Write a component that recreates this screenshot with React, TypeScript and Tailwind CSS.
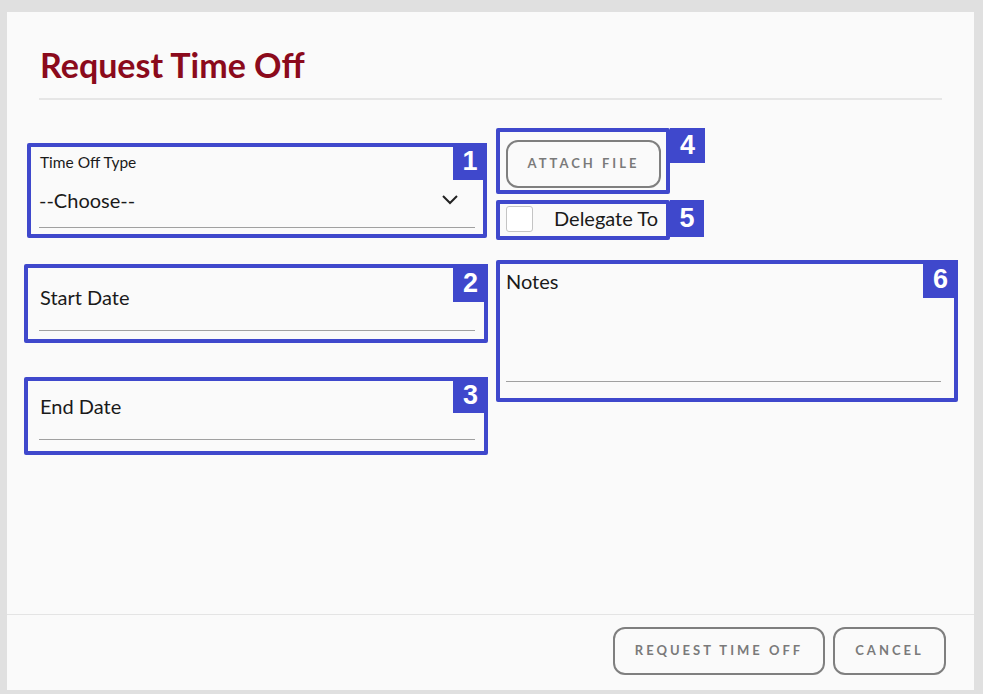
import React from 'react';

const lato = { fontFamily: 'Lato, "Liberation Sans", sans-serif' };

function Badge({ n, className }: { n: string; className: string }) {
  return (
    <div
      className={`absolute flex items-center justify-center bg-[#3f48cc] text-white text-[27px] font-bold leading-none font-['Liberation_Sans',Arial,sans-serif] ${className}`}
    >
      {n}
    </div>
  );
}

function Marker({ box, badge, n }: { box: string; badge: string; n: string }) {
  return (
    <>
      <div className={`absolute border-[4px] border-[#3f48cc] rounded-[2px] pointer-events-none ${box}`} />
      <Badge n={n} className={badge} />
    </>
  );
}

function OutlineButton({ label, className }: { label: string; className: string }) {
  return (
    <button
      className={`h-[48px] border-2 border-[#7f7f7f] rounded-[12px] text-[13px] font-bold tracking-[3px] text-[#7a7a7a] bg-transparent ${className}`}
    >
      {label}
    </button>
  );
}

export default function App() {
  return (
    <div className="h-[694px] w-[983px] bg-[#e0e0e0] pt-[12px] pl-[7px]" style={lato}>
      <div className="relative h-[678px] w-[967px] bg-[#fafafa] flex flex-col text-[#1a1a1a]">
        <header className="px-[32px] pt-[33px]">
          <h1 className="text-[34px] font-bold text-[#8b0a1c] leading-[40px] pl-[1px]">Request Time Off</h1>
          <div className="mt-[13px] h-[2px] bg-[#e6e6e6]" />
        </header>

        <main className="flex-1 flex gap-[31px] pl-[32px] pr-[33px] pt-[29px]">
          <div className="w-[436px] flex flex-col pt-[23px]">
            <div>
              <div className="text-[15.5px] leading-[20px] pl-[1px]">Time Off Type</div>
              <div className="h-[56px] flex items-center justify-between border-b border-[#a0a0a0]">
                <span className="text-[20px]">--Choose--</span>
                <svg width="18" height="11" viewBox="0 0 18 11" className="mr-[16px]">
                  <path d="M2 2 L9 9 L16 2" fill="none" stroke="#222" strokeWidth="2" />
                </svg>
              </div>
            </div>
            <div className="mt-[57px] pb-[21px] border-b border-[#a0a0a0] text-[20px] leading-[24px] pl-[1px]">
              Start Date
            </div>
            <div className="mt-[63px] pb-[21px] border-b border-[#a0a0a0] text-[20px] leading-[24px] pl-[1px]">
              End Date
            </div>
          </div>

          <div className="w-[435px] flex flex-col pt-[11px]">
            <OutlineButton label="ATTACH FILE" className="w-[155px]" />
            <div className="mt-[18px] h-[26px] flex items-center gap-[21px]">
              <div className="w-[27px] h-[26px] border border-[#c4c4c4] rounded-[3px] bg-white" />
              <span className="text-[20px] -mt-[3px]">Delegate To</span>
            </div>
            <div className="mt-[37px] pb-[88px] border-b border-[#a0a0a0] text-[20px] leading-[24px]">Notes</div>
          </div>
        </main>

        <footer className="border-t border-[#e4e4e4] flex justify-end gap-[8px] pt-[12px] pb-[15px] pr-[28px]">
          <OutlineButton label="REQUEST TIME OFF" className="w-[212px]" />
          <OutlineButton label="CANCEL" className="w-[113px]" />
        </footer>

        <Marker n="1" box="left-[20px] top-[131px] w-[460px] h-[95px]" badge="left-[446px] top-[131px] w-[34px] h-[37px]" />
        <Marker n="2" box="left-[17px] top-[252px] w-[464px] h-[79px]" badge="left-[446px] top-[252px] w-[35px] h-[38px]" />
        <Marker n="3" box="left-[17px] top-[365px] w-[464px] h-[78px]" badge="left-[446px] top-[365px] w-[35px] h-[36px]" />
        <Marker n="4" box="left-[489px] top-[116px] w-[174px] h-[66px]" badge="left-[663px] top-[116px] w-[35px] h-[35px]" />
        <Marker n="5" box="left-[489px] top-[188px] w-[174px] h-[40px]" badge="left-[663px] top-[188px] w-[34px] h-[37px]" />
        <Marker n="6" box="left-[489px] top-[248px] w-[462px] h-[142px]" badge="left-[916px] top-[248px] w-[35px] h-[38px]" />
      </div>
    </div>
  );
}
